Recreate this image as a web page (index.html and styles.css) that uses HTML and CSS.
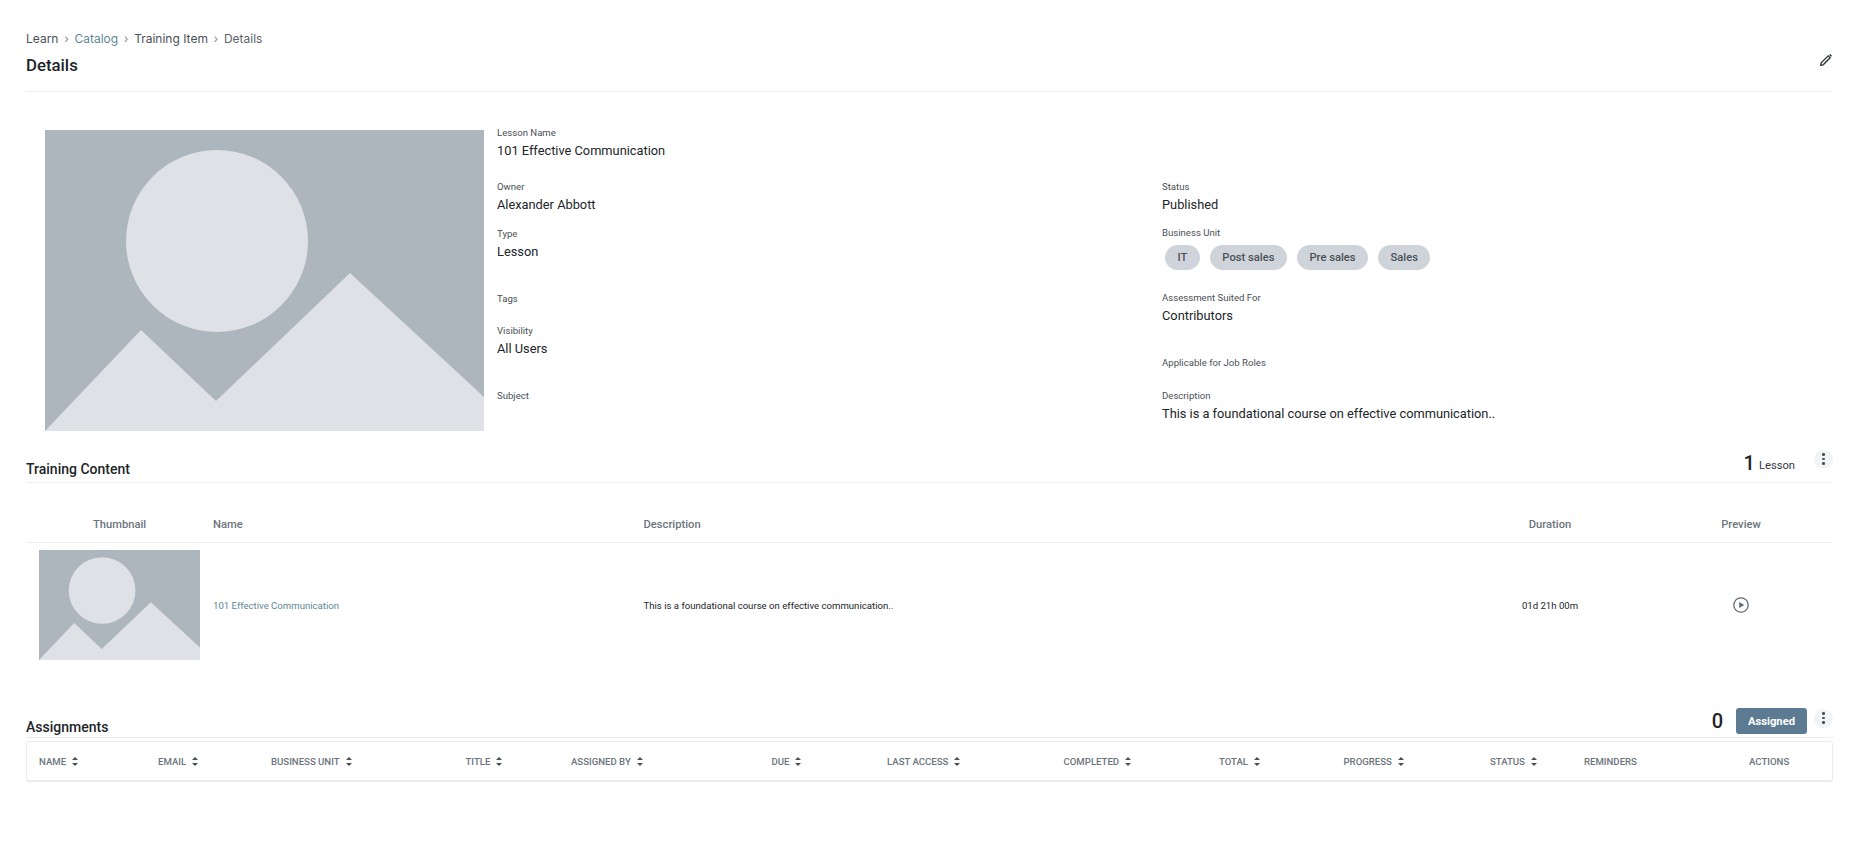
FILE: index.html
```html
<!DOCTYPE html>
<html lang="en">
<head>
  <meta charset="UTF-8">
  <title>Details</title>
  <link rel="stylesheet" href="styles.css">
</head>
<body>
  <div class="breadcrumb">
    <span>Learn</span><span class="sep">›</span>
    <span class="crumb-link">Catalog</span><span class="sep">›</span>
    <span class="crumb-mid">Training Item</span><span class="sep">›</span>
    <span class="crumb-last">Details</span>
  </div>

  <div class="page-head">
    <h1 class="page-title">Details</h1>
    <svg class="edit-icon" viewBox="0 0 12 12" width="12" height="12">
      <path d="M0.7 11.3 L1.2 8.8 L8.2 1.8 L10.2 3.8 L3.2 10.8 Z" fill="none" stroke="#2b3035" stroke-width="1.3"/>
      <path d="M9.2 0.9 L10.2 0 L12 1.8 L11.1 2.8 Z" fill="#2b3035"/>
    </svg>
  </div>

  <div class="overview">
    <svg class="cover" viewBox="0 0 439 301" width="439" height="301">
      <rect width="439" height="301" fill="#adb5bd"/>
      <circle cx="172" cy="111" r="91" fill="#dee2e6"/>
      <polygon points="0,301 96,200 171,271 305,143 439,267 439,301" fill="#dee2e6"/>
    </svg>
    <div class="info-col info-left">
      <div class="field field-first"><div class="label">Lesson Name</div><div class="value">101 Effective Communication</div></div>
      <div class="field"><div class="label">Owner</div><div class="value">Alexander Abbott</div></div>
      <div class="field field-tall"><div class="label">Type</div><div class="value">Lesson</div></div>
      <div class="field field-tags"><div class="label">Tags</div></div>
      <div class="field field-tall"><div class="label">Visibility</div><div class="value">All Users</div></div>
      <div class="field"><div class="label">Subject</div></div>
    </div>
    <div class="info-col info-right">
      <div class="field field-status"><div class="label">Status</div><div class="value">Published</div></div>
      <div class="field field-tall">
        <div class="label">Business Unit</div>
        <div class="pills">
          <span class="pill">IT</span>
          <span class="pill">Post sales</span>
          <span class="pill">Pre sales</span>
          <span class="pill">Sales</span>
        </div>
      </div>
      <div class="field field-tall"><div class="label">Assessment Suited For</div><div class="value">Contributors</div></div>
      <div class="field field-short"><div class="label">Applicable for Job Roles</div></div>
      <div class="field"><div class="label">Description</div><div class="value">This is a foundational course on effective communication..</div></div>
    </div>
  </div>

  <div class="section-head training-head">
    <h2 class="section-title">Training Content</h2>
    <div class="section-tools">
      <span class="count">1</span><span class="count-label">Lesson</span>
      <button class="more-btn"><i></i><i></i><i></i></button>
    </div>
  </div>

  <div class="content-table">
    <div class="content-row content-header">
      <div class="center">Thumbnail</div>
      <div>Name</div>
      <div>Description</div>
      <div class="center">Duration</div>
      <div class="center">Preview</div>
    </div>
    <div class="content-row content-body">
      <div class="center thumb-cell">
        <svg class="thumb" viewBox="0 0 439 301" width="161" height="110" preserveAspectRatio="none">
          <rect width="439" height="301" fill="#adb5bd"/>
          <ellipse cx="172" cy="111" rx="91" ry="91" fill="#dee2e6"/>
          <polygon points="0,301 96,200 171,271 305,143 439,267 439,301" fill="#dee2e6"/>
        </svg>
      </div>
      <div class="lesson-link">101 Effective Communication</div>
      <div>This is a foundational course on effective communication..</div>
      <div class="center">01d 21h 00m</div>
      <div class="center">
        <svg class="play-icon" viewBox="0 0 16 16" width="16" height="16">
          <circle cx="8" cy="8" r="7.2" fill="none" stroke="#5f6b76" stroke-width="1.3"/>
          <polygon points="6.2,4.9 11.2,8 6.2,11.1" fill="#5f6b76"/>
        </svg>
      </div>
    </div>
  </div>

  <div class="section-head assign-head">
    <h2 class="section-title">Assignments</h2>
    <div class="section-tools">
      <span class="count count-zero">0</span>
      <button class="assigned-btn">Assigned</button>
      <button class="more-btn"><i></i><i></i><i></i></button>
    </div>
  </div>

  <div class="assign-card">
    <div class="col">Name <span class="sort"></span></div>
    <div class="col">Email <span class="sort"></span></div>
    <div class="col">Business Unit <span class="sort"></span></div>
    <div class="col">Title <span class="sort"></span></div>
    <div class="col">Assigned By <span class="sort"></span></div>
    <div class="col">Due <span class="sort"></span></div>
    <div class="col">Last Access <span class="sort"></span></div>
    <div class="col">Completed <span class="sort"></span></div>
    <div class="col">Total <span class="sort"></span></div>
    <div class="col">Progress <span class="sort"></span></div>
    <div class="col">Status <span class="sort"></span></div>
    <div class="col">Reminders</div>
    <div class="col">Actions</div>
  </div>
</body>
</html>
```

FILE: styles.css
```css
body {
  margin: 0;
  padding: 31px 26px 0;
  font-family: Roboto, sans-serif;
  color: #212529;
  background: #ffffff;
}

.breadcrumb {
  display: flex;
  align-items: center;
  height: 15px;
  font-family: Inter, sans-serif;
  font-size: 12px;
  color: #495057;
}

.sep {
  width: 16px;
  text-align: center;
  color: #868e96;
}

.crumb-link {
  color: #5f8896;
}

.crumb-mid {
  color: #495057;
}

.crumb-last {
  color: #5c636a;
}

.page-head {
  display: flex;
  justify-content: space-between;
  align-items: flex-start;
  height: 45px;
  border-bottom: 1px solid #eeeeee;
}

.page-title {
  margin: 9px 0 0;
  font-size: 16.8px;
  line-height: 20px;
  font-weight: 500;
}

.edit-icon {
  margin-top: 8px;
  margin-right: 1px;
}

.overview {
  display: flex;
  height: 345px;
  padding: 38px 0 0 19px;
  box-sizing: border-box;
}

.cover {
  flex: none;
}

.info-col {
  display: flex;
  flex-direction: column;
}

.info-left {
  width: 665px;
  margin-left: 13px;
  margin-top: -3px;
}

.info-right {
  margin-top: 51px;
}

.field {
  min-height: 47px;
}

.field-first {
  min-height: 54px;
}

.field-status {
  min-height: 46px;
}

.field-tall {
  min-height: 65px;
}

.field-short {
  min-height: 33px;
}

.field-tags {
  min-height: 32px;
}

.label {
  font-size: 9.6px;
  line-height: 12px;
  color: #495057;
}

.value {
  margin-top: 2px;
  font-size: 12.8px;
  line-height: 20px;
  color: #212529;
}

.pills {
  display: flex;
  gap: 10px;
  margin: 6px 0 0 3px;
}

.pill {
  height: 25px;
  padding: 0 12.5px;
  border-radius: 13px;
  background: #ced4da;
  font-size: 11.2px;
  font-weight: 500;
  line-height: 25px;
  color: #495057;
}

.section-head {
  display: flex;
  justify-content: space-between;
  align-items: flex-end;
  border-bottom: 1px solid #eeeeee;
}

.training-head {
  height: 28px;
  margin-top: 17px;
}

.assign-head {
  height: 36px;
  margin-top: 34px;
}

.section-title {
  margin: 0 0 4px;
  font-size: 14px;
  line-height: 18px;
  font-weight: 500;
}

.assign-head .section-title {
  margin-bottom: 1px;
}

.section-tools {
  display: flex;
  align-items: center;
  margin-bottom: 7px;
}

.assign-head .section-tools {
  margin-bottom: 3px;
}

.assign-head .more-btn {
  margin-bottom: 6px;
}

.count {
  margin-top: 8px;
  font-size: 20px;
  font-weight: 500;
  line-height: 24px;
  color: #212529;
}

.count-label {
  margin-top: 12px;
  margin-left: 4px;
  margin-right: 19px;
  font-size: 11.2px;
  color: #343a40;
}

.count-zero {
  margin-top: 0;
  margin-right: 13px;
}

.more-btn {
  display: flex;
  flex-direction: column;
  justify-content: center;
  align-items: center;
  gap: 2px;
  width: 19px;
  height: 19px;
  padding: 0;
  border: none;
  border-radius: 50%;
  background: #f1f3f5;
}

.more-btn i {
  width: 2.5px;
  height: 2.5px;
  border-radius: 50%;
  background: #495057;
}

.assigned-btn {
  width: 71px;
  height: 26px;
  margin-right: 7px;
  padding: 0;
  border: none;
  border-radius: 3px;
  background: #5c7a91;
  font-family: Roboto, sans-serif;
  font-size: 11.2px;
  font-weight: 700;
  color: #ffffff;
}

.content-table {
  margin-top: 24px;
}

.content-row {
  display: grid;
  grid-template-columns: 187px 430.5px 1fr 198px 184px;
  align-items: center;
}

.center {
  text-align: center;
}

.content-header {
  height: 35px;
  border-bottom: 1px solid #eeeeee;
  font-size: 11.2px;
  font-weight: 500;
  color: #6c757d;
}

.content-body {
  height: 124px;
  font-size: 9.6px;
  color: #212529;
}

.thumb-cell {
  display: flex;
  justify-content: flex-start;
  padding-left: 13px;
}

.thumb {
  display: block;
}

.lesson-link {
  color: #5f8896;
}

.play-icon {
  display: block;
  margin: 0 auto;
}

.assign-card {
  display: grid;
  grid-template-columns: 119px 113px 194.5px 105.5px 200.5px 115.5px 176.5px 155.5px 124.5px 146.5px 94px 165px 1fr;
  align-items: center;
  height: 41px;
  margin-top: 3px;
  padding-left: 12px;
  box-sizing: border-box;
  border: 1px solid #e9ecef;
  border-bottom-width: 2px;
  border-radius: 3px;
}

.col {
  display: flex;
  align-items: center;
  gap: 6px;
  font-size: 9.6px;
  font-weight: 500;
  text-transform: uppercase;
  color: #6c757d;
}

.sort {
  position: relative;
  width: 6px;
  height: 9px;
}

.sort::before,
.sort::after {
  content: "";
  position: absolute;
  left: 0;
  border-left: 3px solid transparent;
  border-right: 3px solid transparent;
}

.sort::before {
  top: 0;
  border-bottom: 3.5px solid #495057;
}

.sort::after {
  bottom: 0;
  border-top: 3.5px solid #495057;
}
```
